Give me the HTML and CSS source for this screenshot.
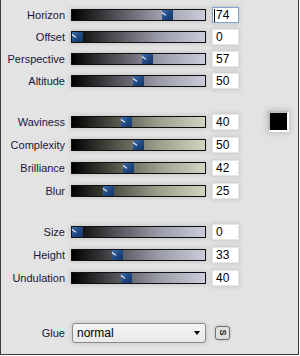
FILE: index.html
```html
<!DOCTYPE html>
<html lang="en">
<head>
    <meta charset="UTF-8">
    <title>Texture Settings</title>
    <link rel="stylesheet" href="styles.css">
</head>
<body>
    <div class="panel">
        <!-- Camera -->
        <div class="group group-first">
            <div class="row">
                <span class="label">Horizon</span>
                <div class="slider"><span class="thumb" style="--v:.74"></span></div>
                <div class="field focused"><span class="caret"></span>74</div>
            </div>
            <div class="row">
                <span class="label">Offset</span>
                <div class="slider"><span class="thumb" style="--v:0"></span></div>
                <div class="field">0</div>
            </div>
            <div class="row">
                <span class="label">Perspective</span>
                <div class="slider"><span class="thumb" style="--v:.57"></span></div>
                <div class="field">57</div>
            </div>
            <div class="row">
                <span class="label">Altitude</span>
                <div class="slider"><span class="thumb" style="--v:.5"></span></div>
                <div class="field">50</div>
            </div>
        </div>

        <!-- Waves -->
        <div class="group">
            <div class="row">
                <span class="label">Waviness</span>
                <div class="slider warm"><span class="thumb" style="--v:.4"></span></div>
                <div class="field">40</div>
                <div class="swatch"></div>
            </div>
            <div class="row">
                <span class="label">Complexity</span>
                <div class="slider warm"><span class="thumb" style="--v:.5"></span></div>
                <div class="field">50</div>
            </div>
            <div class="row">
                <span class="label">Brilliance</span>
                <div class="slider warm"><span class="thumb" style="--v:.42"></span></div>
                <div class="field">42</div>
            </div>
            <div class="row">
                <span class="label">Blur</span>
                <div class="slider warm"><span class="thumb" style="--v:.25"></span></div>
                <div class="field">25</div>
            </div>
        </div>

        <!-- Shape -->
        <div class="group">
            <div class="row">
                <span class="label">Size</span>
                <div class="slider"><span class="thumb" style="--v:0"></span></div>
                <div class="field">0</div>
            </div>
            <div class="row">
                <span class="label">Height</span>
                <div class="slider"><span class="thumb" style="--v:.33"></span></div>
                <div class="field">33</div>
            </div>
            <div class="row">
                <span class="label">Undulation</span>
                <div class="slider"><span class="thumb" style="--v:.4"></span></div>
                <div class="field">40</div>
            </div>
        </div>

        <div class="row glue-row">
            <span class="label">Glue</span>
            <div class="dropdown">
                <span>normal</span>
                <span class="arrow"></span>
            </div>
            <button class="seed-button"><span>S</span></button>
        </div>
    </div>
</body>
</html>
```

FILE: styles.css
```css
body {
  margin: 0;
  padding: 0;
  background-color: #ffffff;
  font-family: "Liberation Sans", Arial, sans-serif;
}

.panel {
  width: 299px;
  height: 355px;
  box-sizing: border-box;
  background-color: #e3e3e3;
  border: 1px solid #3a3a3a;
  border-top: none;
  padding-top: 4px;
}

.group {
  margin-top: 18px;
}

.group-first {
  margin-top: 0;
}

.row {
  display: flex;
  align-items: center;
  height: 23px;
}

.group-first .row {
  height: 22px;
}

.label {
  width: 64px;
  margin-right: 6px;
  text-align: right;
  font-size: 11px;
  color: #16163e;
}

/* Sliders */
.slider {
  position: relative;
  width: 135px;
  height: 12px;
  box-sizing: border-box;
  border: 1px solid #101010;
  background: linear-gradient(to right, #000000, #4a4a50 30%, #9a9ba8 65%, #cbccdb);
  box-shadow: 0 0 4px 1px rgba(0, 0, 0, 0.12);
}

.slider.warm {
  background: linear-gradient(to right, #000000, #4c4c44 30%, #9d9e8c 65%, #d2d3c0);
}

.thumb {
  position: absolute;
  top: 0;
  bottom: 0;
  left: calc((100% - 11px) * var(--v));
  width: 11px;
  background: linear-gradient(135deg, #3f6eac, #214a84 50%, #143565);
}

.thumb::before {
  content: "";
  position: absolute;
  top: 2px;
  left: 0;
  width: 5px;
  height: 1px;
  background-color: #ffffff;
  transform: rotate(35deg);
  transform-origin: left center;
}

/* Number fields */
.field {
  display: flex;
  align-items: center;
  width: 27px;
  height: 16px;
  margin-left: 6px;
  box-sizing: border-box;
  padding-left: 3px;
  background-color: #ffffff;
  border: 1px solid #e6e6e6;
  font-size: 12px;
  color: #000000;
  box-shadow: 0 0 4px 1px rgba(0, 0, 0, 0.12);
}

.field.focused {
  border-color: #7fa3cf;
  padding-left: 1px;
}

.caret {
  width: 1px;
  height: 13px;
  margin-right: 1px;
  background-color: #000000;
}

.swatch {
  width: 21px;
  height: 21px;
  margin-left: 29px;
  box-sizing: border-box;
  background-color: #000000;
  border: 2px solid;
  border-color: #bdbdbd #ffffff #ffffff #bdbdbd;
  box-shadow: 0 0 5px 2px rgba(0, 0, 0, 0.12);
}

/* Glue */
.glue-row {
  margin-top: 33px;
  height: 21px;
}

.dropdown {
  display: flex;
  align-items: center;
  justify-content: space-between;
  width: 134px;
  height: 20px;
  margin-left: 1px;
  box-sizing: border-box;
  padding: 0 5px 0 4px;
  background: linear-gradient(#f4f4f4, #e8e8e8);
  border: 1px solid #8a8a8a;
  border-radius: 3px;
  font-size: 12px;
  color: #000000;
  box-shadow: 0 0 4px 1px rgba(0, 0, 0, 0.1);
}

.arrow {
  width: 0;
  height: 0;
  border-left: 3px solid transparent;
  border-right: 3px solid transparent;
  border-top: 4px solid #000000;
  margin-top: 1px;
}

.seed-button {
  display: flex;
  align-items: center;
  justify-content: center;
  width: 15px;
  height: 14px;
  margin-left: 9px;
  padding: 0;
  box-sizing: border-box;
  background-color: #e0e0e0;
  border: 1px solid #6c6c6c;
  border-radius: 3px;
  font-family: "Liberation Sans", Arial, sans-serif;
  font-size: 9px;
  font-weight: bold;
  color: #202020;
  box-shadow: 0 0 3px 1px rgba(0, 0, 0, 0.1);
}

.seed-button span {
  display: block;
  transform: rotate(90deg);
  line-height: 9px;
}
```
